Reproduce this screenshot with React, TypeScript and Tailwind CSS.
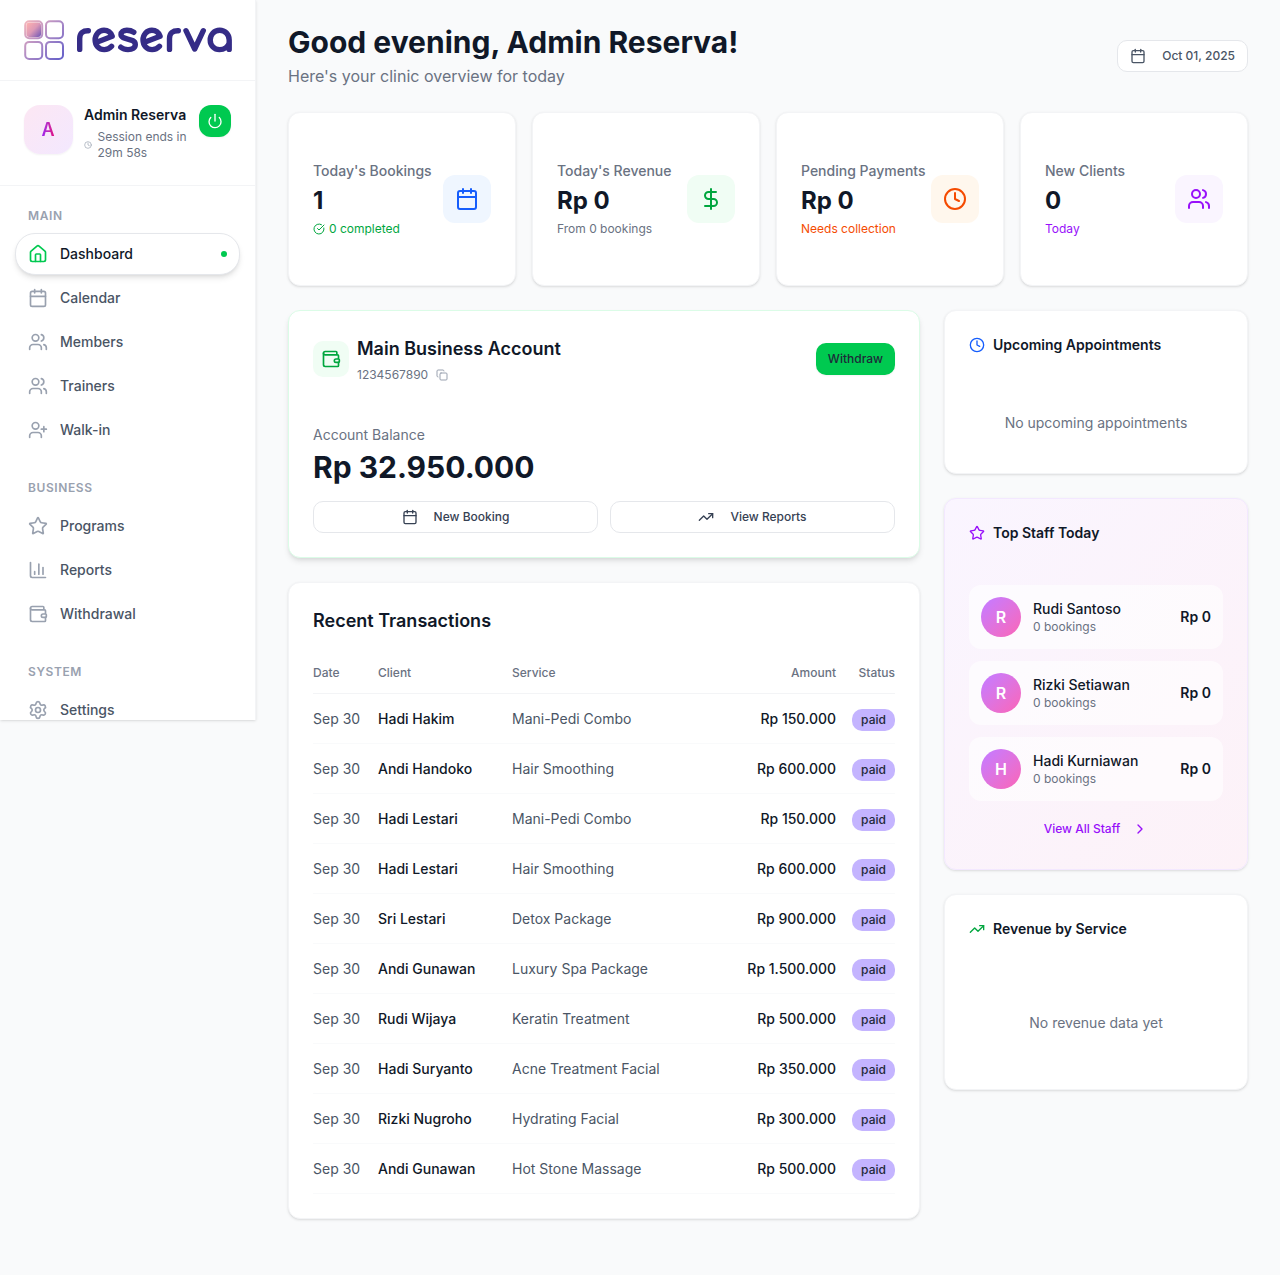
import { Calendar, House, Users, UserPlus, Star, ChartColumn, Wallet, Settings, Clock, Power, CircleCheckBig, DollarSign, Copy, TrendingUp, ChevronRight } from "lucide-react";
import type { ReactNode } from "react";

function NavItem({ icon, label, active = false }: { icon: ReactNode; label: string; active?: boolean }) {
  return (
    <a className={active
      ? "flex h-[42px] items-center gap-3 rounded-[20px] border border-gray-200 bg-white px-3 text-sm font-medium text-gray-900 shadow-md"
      : "flex h-[42px] items-center gap-3 rounded-[20px] border border-transparent px-3 text-sm font-medium text-gray-600"}>
      <span className={active ? "text-[#00c950]" : "text-gray-400"}>{icon}</span>
      <span>{label}</span>
      {active && <span className="ml-auto size-1.5 rounded-full bg-[#00c950]" />}
    </a>
  );
}

function NavGroup({ title, children }: { title: string; children: ReactNode }) {
  return (
    <section>
      <h3 className="mb-[7px] px-[13px] text-xs leading-5 font-semibold tracking-[0.6px] text-gray-400">{title}</h3>
      <div className="flex flex-col gap-0.5">{children}</div>
    </section>
  );
}

function Logo() {
  return (
    <svg width="210" height="44" viewBox="0 0 210 44" fill="none">
      <defs>
        <linearGradient id="frame" x1="0" y1="2" x2="42" y2="42" gradientUnits="userSpaceOnUse">
          <stop stopColor="#f8b8bc" /><stop offset="0.5" stopColor="#a988c6" /><stop offset="1" stopColor="#5d5bc9" />
        </linearGradient>
        <linearGradient id="tile" x1="3" y1="5" x2="18" y2="19" gradientUnits="userSpaceOnUse">
          <stop stopColor="#fdb0ae" /><stop offset="0.45" stopColor="#dd9ab7" /><stop offset="1" stopColor="#6650b6" />
        </linearGradient>
      </defs>
      <g stroke="url(#frame)" strokeWidth="2">
        <rect x="1.2" y="3.2" width="17" height="17" rx="4" />
        <rect x="22" y="3.2" width="17" height="17" rx="4" />
        <rect x="1.2" y="23.9" width="17" height="17" rx="4" />
        <rect x="22" y="23.9" width="17" height="17" rx="4" />
      </g>
      <rect x="2.4" y="4.400" width="14.600" height="14.600" rx="3" fill="url(#tile)" />
      <g stroke="#352c87" strokeWidth="5.4" strokeLinecap="round" strokeLinejoin="round">
        <path d="M55.700 31.400V20.500C55.700 15 59 12.500 64.300 12.700" />
        <path d="M72 24.500L88.200 18.300C86.800 14.500 83.500 12.300 80 12.300C75 12.300 71.100 16.500 71.100 22C71.100 27.500 75 31.600 80.200 31.600C83 31.600 85.700 30.500 87.600 28.300" />
        <path d="M109.800 14.300C107.500 12.700 105 12.300 102.800 12.300C99.300 12.300 97 14 97 16.600C97 22.500 111.300 19.500 111.300 26.500C111.300 29.700 108.500 31.600 104 31.600C101.200 31.600 98.700 30.800 96.800 29.200" />
        <path d="M119.900 24.500L136.100 18.300C134.700 14.500 131.400 12.300 127.900 12.300C122.900 12.300 119 16.500 119 22C119 27.500 122.900 31.600 128.100 31.600C130.900 31.600 133.600 30.500 135.500 28.300" />
        <path d="M145.500 31.400V20.500C145.500 15 148.800 12.500 154.300 12.700M162 12.700L170.700 31L179.300 12.700" />
        <path d="M205.200 31.400V22C205.200 16.300 201 12.300 195.700 12.300C190.200 12.300 186.200 16.500 186.200 22C186.200 27.500 190.200 31.600 195.500 31.600C200 31.600 204 29 205.200 25" />
      </g>
    </svg>
  );
}

function Sidebar() {
  return (
    <aside className="h-[720px] w-64 shrink-0 overflow-hidden border-r border-gray-100 bg-white shadow-sm">
      <div className="flex h-[81px] items-center border-b border-gray-100 pl-6"><Logo /></div>
      <div className="flex h-[105px] items-start border-b border-gray-100 px-6 pt-6">
        <div className="-ml-[0.5px] flex size-[49px] shrink-0 items-center justify-center rounded-2xl bg-gradient-to-br from-pink-100 to-purple-100 text-lg font-semibold shadow-xs">
          <span className="bg-gradient-to-r from-purple-600 to-pink-600 bg-clip-text leading-7 text-transparent">A</span>
        </div>
        <div className="ml-[11.5px] w-[103px]">
          <p className="text-sm leading-5 font-semibold whitespace-nowrap text-gray-900">Admin Reserva</p>
          <div className="mt-1 flex items-center gap-[5.5px] text-xs leading-4 text-gray-500">
            <Clock size={8} className="shrink-0 text-gray-400" />
            <span className="whitespace-nowrap">Session ends in<br />29m 58s</span>
          </div>
        </div>
        <button className="ml-3 flex size-8 items-center justify-center rounded-[12px] bg-[#00c950] text-white shadow-xs"><Power size={16} /></button>
      </div>
      <nav className="flex flex-col gap-[27px] px-[15px] pt-5">
        <NavGroup title="MAIN">
          <NavItem active icon={<House size={20} />} label="Dashboard" />
          <NavItem icon={<Calendar size={20} />} label="Calendar" />
          <NavItem icon={<Users size={20} />} label="Members" />
          <NavItem icon={<Users size={20} />} label="Trainers" />
          <NavItem icon={<UserPlus size={20} />} label="Walk-in" />
        </NavGroup>
        <NavGroup title="BUSINESS">
          <NavItem icon={<Star size={20} />} label="Programs" />
          <NavItem icon={<ChartColumn size={20} />} label="Reports" />
          <NavItem icon={<Wallet size={20} />} label="Withdrawal" />
        </NavGroup>
        <NavGroup title="SYSTEM">
          <NavItem icon={<Settings size={20} />} label="Settings" />
        </NavGroup>
      </nav>
    </aside>
  );
}

function StatCard({ title, value, note, noteClass, iconClass, icon }: { title: string; value: string; note: ReactNode; noteClass: string; iconClass: string; icon: ReactNode }) {
  return (
    <div className="flex h-[174px] items-center justify-between rounded-xl border border-gray-100 bg-white px-6 shadow-sm">
      <div className="whitespace-nowrap">
        <p className="text-sm font-medium text-gray-500">{title}</p>
        <p className="mt-1 text-2xl leading-8 font-bold text-gray-900">{value}</p>
        <p className={noteClass}>{note}</p>
      </div>
      <div className={iconClass}>{icon}</div>
    </div>
  );
}

const transactions = [
  ["Hadi Hakim", "Mani-Pedi Combo", "Rp 150.000"],
  ["Andi Handoko", "Hair Smoothing", "Rp 600.000"],
  ["Hadi Lestari", "Mani-Pedi Combo", "Rp 150.000"],
  ["Hadi Lestari", "Hair Smoothing", "Rp 600.000"],
  ["Sri Lestari", "Detox Package", "Rp 900.000"],
  ["Andi Gunawan", "Luxury Spa Package", "Rp 1.500.000"],
  ["Rudi Wijaya", "Keratin Treatment", "Rp 500.000"],
  ["Hadi Suryanto", "Acne Treatment Facial", "Rp 350.000"],
  ["Rizki Nugroho", "Hydrating Facial", "Rp 300.000"],
  ["Andi Gunawan", "Hot Stone Massage", "Rp 500.000"],
];

const staff = ["Rudi Santoso", "Rizki Setiawan", "Hadi Kurniawan"];

export default function App() {
  return (
    <div className="flex min-h-[1275px] items-start bg-[#f9fafb] font-['Inter',sans-serif] text-gray-900">
      <Sidebar />
      <main className="min-w-0 flex-1 px-8 pt-6">
        <header className="flex h-16 items-center justify-between">
          <div>
            <h1 className="text-[30px] leading-9 font-bold">Good evening, Admin Reserva!</h1>
            <p className="mt-1 text-base leading-6 text-gray-500">Here's your clinic overview for today</p>
          </div>
          <button className="flex h-8 items-center gap-4 rounded-[10px] border border-gray-200 bg-white px-3 text-xs font-medium text-gray-600"><Calendar size={16} />Oct 01, 2025</button>
        </header>
        <div className="mt-6 grid grid-cols-4 gap-4">
          <StatCard title="Today's Bookings" value="1" note={<><CircleCheckBig size={12} />0 completed</>} noteClass="mt-1 flex items-center gap-1 text-xs text-green-600" iconClass="flex size-12 shrink-0 items-center justify-center rounded-xl bg-blue-50 text-blue-600" icon={<Calendar size={24} />} />
          <StatCard title="Today's Revenue" value="Rp 0" note="From 0 bookings" noteClass="mt-1 text-xs text-gray-500" iconClass="flex size-12 shrink-0 items-center justify-center rounded-xl bg-green-50 text-green-600" icon={<DollarSign size={24} />} />
          <StatCard title="Pending Payments" value="Rp 0" note="Needs collection" noteClass="mt-1 text-xs text-orange-600" iconClass="flex size-12 shrink-0 items-center justify-center rounded-xl bg-orange-50 text-orange-600" icon={<Clock size={24} />} />
          <StatCard title="New Clients" value="0" note="Today" noteClass="mt-1 text-xs text-purple-600" iconClass="flex size-12 shrink-0 items-center justify-center rounded-xl bg-purple-50 text-purple-600" icon={<Users size={24} />} />
        </div>
        <div className="mt-6 flex items-start gap-6">
          <div className="flex w-[632px] flex-col gap-6">
            <section className="h-[248px] rounded-xl border border-green-100 bg-white p-6 shadow-md">
              <div className="flex h-12 items-center">
                <span className="flex size-9 items-center justify-center rounded-[10px] bg-green-50 text-green-600"><Wallet size={20} /></span>
                <div className="ml-2">
                  <h2 className="text-lg leading-7 font-semibold">Main Business Account</h2>
                  <p className="mt-1 flex items-center gap-2 text-xs leading-4 text-gray-500">1234567890 <Copy size={12} className="text-gray-400" /></p>
                </div>
                <button className="ml-auto h-8 rounded-[10px] bg-[#00c950] px-3 text-xs font-medium text-gray-800 shadow-xs">Withdraw</button>
              </div>
              <p className="mt-[42px] text-sm leading-5 text-gray-500">Account Balance</p>
              <p className="mt-1 text-[30px] leading-9 font-bold">Rp 32.950.000</p>
              <div className="mt-4 grid grid-cols-2 gap-3">
                <button className="flex h-8 items-center justify-center gap-4 rounded-[10px] border border-gray-200 text-xs font-medium text-gray-700"><Calendar size={16} />New Booking</button>
                <button className="flex h-8 items-center justify-center gap-4 rounded-[10px] border border-gray-200 text-xs font-medium text-gray-700"><TrendingUp size={16} />View Reports</button>
              </div>
            </section>
            <section className="h-[637px] rounded-xl border border-gray-100 bg-white px-6 pt-6 shadow-sm">
              <h2 className="text-lg leading-7 font-semibold">Recent Transactions</h2>
              <table className="mt-[17px] w-full table-fixed">
                <colgroup><col className="w-[65px]" /><col className="w-[134px]" /><col className="w-[208px]" /><col className="w-[116px]" /><col className="w-[59px]" /></colgroup>
                <thead><tr className="h-[41px] border-b border-gray-100 text-left text-xs text-gray-500">
                  <th className="pt-0.5 font-medium">Date</th><th className="pt-0.5 font-medium">Client</th><th className="pt-0.5 font-medium">Service</th><th className="pt-0.5 text-right font-medium">Amount</th><th className="pt-0.5 text-right font-medium">Status</th>
                </tr></thead>
                <tbody>{transactions.map(([client, service, amount], i) => (
                  <tr key={i} className="h-[50px] border-b border-gray-50 text-sm">
                    <td className="pt-0.5 text-gray-600">Sep 30</td><td className="pt-0.5 font-medium">{client}</td><td className="pt-0.5 text-gray-600">{service}</td><td className="pt-0.5 text-right font-medium">{amount}</td>
                    <td className="pt-0.5"><div className="mt-0.5 ml-auto flex h-[22px] w-[43px] items-center justify-center rounded-[10px] bg-[#c4b4ff] text-xs font-medium text-gray-800">paid</div></td>
                  </tr>
                ))}</tbody>
              </table>
            </section>
          </div>
          <div className="flex w-[304px] flex-col gap-6">
            <section className="h-[164px] rounded-xl border border-gray-100 bg-white px-6 pt-6 shadow-sm">
              <h2 className="flex items-center gap-2 text-sm leading-5 font-semibold"><Clock size={16} className="text-blue-600" />Upcoming Appointments</h2>
              <p className="mt-[58px] text-center text-sm text-gray-500">No upcoming appointments</p>
            </section>
            <section className="h-[372px] rounded-xl border border-purple-100 bg-gradient-to-br from-purple-50 to-pink-50 px-6 pt-6 shadow-sm">
              <h2 className="flex items-center gap-2 text-sm leading-5 font-semibold"><Star size={16} className="text-purple-600" />Top Staff Today</h2>
              <div className="mt-[42px] flex flex-col gap-3">{staff.map((name) => (
                <div key={name} className="flex h-16 items-center rounded-xl bg-white/60 px-3">
                  <span className="flex size-10 items-center justify-center rounded-full bg-gradient-to-br from-purple-400 to-pink-400 text-base font-semibold text-white">{name[0]}</span>
                  <div className="ml-3"><p className="text-sm leading-5 font-medium">{name}</p><p className="text-xs leading-4 text-gray-500">0 bookings</p></div>
                  <span className="ml-auto text-sm font-semibold">Rp 0</span>
                </div>
              ))}</div>
              <button className="mt-3 flex h-8 w-full items-center justify-center gap-3 text-xs font-medium text-purple-600">View All Staff<ChevronRight size={16} /></button>
            </section>
            <section className="h-[196px] rounded-xl border border-gray-100 bg-white px-6 pt-6 shadow-sm">
              <h2 className="flex items-center gap-2 text-sm leading-5 font-semibold"><TrendingUp size={16} className="text-green-600" />Revenue by Service</h2>
              <p className="mt-[74px] text-center text-sm text-gray-500">No revenue data yet</p>
            </section>
          </div>
        </div>
      </main>
    </div>
  );
}
